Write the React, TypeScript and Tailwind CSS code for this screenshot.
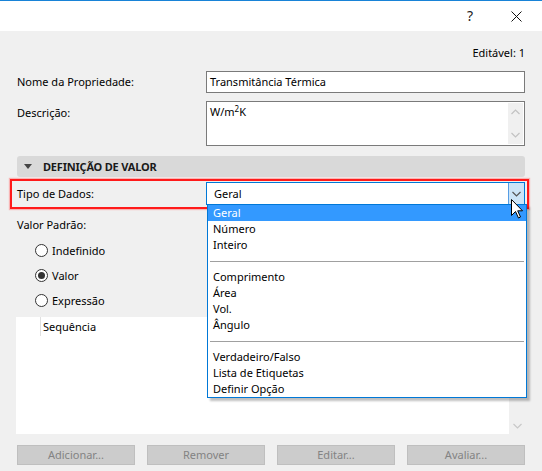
import React from 'react';

const FONT = { fontFamily: '"Noto Sans", "Open Sans", sans-serif' };

function Chevron({ up = false, className = '' }: { up?: boolean; className?: string }) {
  return (
    <svg width="9" height="6" viewBox="0 0 9 6" className={className}>
      <path
        d={up ? 'M0.5 5 L4.5 1 L8.5 5' : 'M0.5 1 L4.5 5 L8.5 1'}
        fill="none"
        stroke="currentColor"
        strokeWidth="1.2"
      />
    </svg>
  );
}

function Radio({ checked, label }: { checked?: boolean; label: string }) {
  return (
    <div className="flex h-[25px] items-center pl-[18px]">
      <span className="flex h-[13px] w-[13px] items-center justify-center rounded-full border border-[#333333] bg-white">
        {checked && <span className="h-[7px] w-[7px] rounded-full bg-[#333333]" />}
      </span>
      <span className="ml-[4px]">{label}</span>
    </div>
  );
}

const groups = [
  ['Geral', 'Número', 'Inteiro'],
  ['Comprimento', 'Área', 'Vol.', 'Ângulo'],
  ['Verdadeiro/Falso', 'Lista de Etiquetas', 'Definir Opção'],
];

function DropdownList() {
  return (
    <div className="absolute left-0 top-full z-10 w-[320px] border border-[#0078d7] bg-white shadow-[3px_3px_2px_rgba(0,0,0,0.25)]">
      {groups.map((items, gi) => (
        <div key={gi}>
          {gi > 0 && (
            <div className="flex h-[16px] items-center px-[2px]">
              <div className="h-px w-full bg-[#a0a0a0]" />
            </div>
          )}
          {items.map(item => (
            <div
              key={item}
              className={
                item === 'Geral'
                  ? 'flex h-[16px] items-center bg-[#3399ff] pl-[5px] text-white'
                  : 'flex h-[16px] items-center pl-[5px]'
              }
            >
              {item}
            </div>
          ))}
        </div>
      ))}
    </div>
  );
}

export default function App() {
  return (
    <div
      className="relative flex h-[471px] w-[542px] flex-col overflow-hidden bg-[#f0f0f0] text-[11px] leading-[16px] text-black"
      style={FONT}
    >
      {/* Title bar */}
      <div className="flex h-[31px] shrink-0 items-center justify-end border-t border-[#1883d7] bg-white pr-[20px]">
        <span className="mr-[38px] text-[14px] text-[#222222]">?</span>
        <svg width="11" height="11" viewBox="0 0 11 11">
          <path d="M0.5 0.5 L10.5 10.5 M10.5 0.5 L0.5 10.5" stroke="#111111" strokeWidth="1" />
        </svg>
      </div>

      {/* Body */}
      <div className="flex flex-col px-[17px]">
        <div className="mt-[14px] text-right">Editável: 1</div>

        <div className="mt-[10px] flex items-center">
          <span className="w-[189px]">Nome da Propriedade:</span>
          <div className="flex h-[22px] flex-1 items-center border border-[#7a7a7a] bg-white pl-[3px]">
            Transmitância Térmica
          </div>
        </div>

        <div className="mt-[8px] flex">
          <span className="w-[189px] pt-[4px]">Descrição:</span>
          <div className="flex h-[45px] flex-1 border border-[#7a7a7a] bg-white">
            <div className="flex-1 pl-[3px] pt-[2px]">
              W/m<sup className="text-[8px]">2</sup>K
            </div>
            <div className="my-px mr-px flex w-[15px] flex-col items-center justify-between bg-[#f0f0f0] py-[6px] text-[#c2c2c2]">
              <Chevron up />
              <Chevron />
            </div>
          </div>
        </div>

        {/* Section header */}
        <div className="mt-[10px] flex h-[21px] items-center rounded-[3px] bg-[#d9d9d9] pl-[7px] font-bold tracking-[-0.2px] text-[#1a1a1a]">
          <svg width="8" height="5" viewBox="0 0 8 5" className="mr-[11px]">
            <path d="M0 0 L8 0 L4 5 Z" fill="#444444" />
          </svg>
          DEFINIÇÃO DE VALOR
        </div>

        {/* Tipo de Dados */}
        <div className="relative mt-[5px] flex items-center">
          <span className="w-[189px]">Tipo de Dados:</span>
          <div className="relative flex h-[23px] flex-1 border border-[#0078d7] bg-white">
            <span className="flex flex-1 items-center pl-[7px]">Geral</span>
            <span className="flex w-[16px] items-center justify-center border-l border-[#569de5] bg-[#cce4f7] text-[#555555]">
              <Chevron />
            </span>
            <DropdownList />
          </div>
          {/* red annotation frame */}
          <div className="pointer-events-none absolute -left-[7px] -right-[4px] -top-[3px] -bottom-[4px] border-2 border-[#ff1a1a] shadow-[0_0_1px_1px_rgba(255,120,120,0.5)]" />
          {/* mouse cursor */}
          <svg
            width="13"
            height="20"
            viewBox="0 0 13 20"
            className="absolute right-[1px] top-[17px] z-20"
          >
            <path
              d="M0.5 0.5 L0.5 16.5 L4.5 12.5 L7.5 19 L9.5 18 L6.7 11.8 L11.5 11.8 Z"
              fill="#ffffff"
              stroke="#000000"
              strokeWidth="1"
            />
          </svg>
        </div>

        <div className="mt-[12px]">Valor Padrão:</div>
        <div className="mt-[5px] flex flex-col">
          <Radio label="Indefinido" />
          <Radio label="Valor" checked />
          <Radio label="Expressão" />
        </div>

        {/* List area */}
        <div className="-ml-px mt-[4px] flex h-[117px]">
          <div className="flex-1 bg-white">
            <div className="ml-[24px] flex h-[19px] items-center border-l border-[#e0e0e0] pl-[2px] pt-[1px]">
              Sequência
            </div>
          </div>
          <div className="flex w-[16px] flex-col items-center justify-end pb-[5px] text-[#c8c8c8]">
            <Chevron />
          </div>
        </div>

        {/* Buttons */}
        <div className="mt-[11px] grid grid-cols-4 gap-[12px]">
          {['Adicionar...', 'Remover', 'Editar...', 'Avaliar...'].map(b => (
            <div
              key={b}
              className="flex h-[20px] items-center justify-center border border-[#bfbfbf] bg-[#cccccc] text-[#838383]"
            >
              {b}
            </div>
          ))}
        </div>
      </div>
    </div>
  );
}
